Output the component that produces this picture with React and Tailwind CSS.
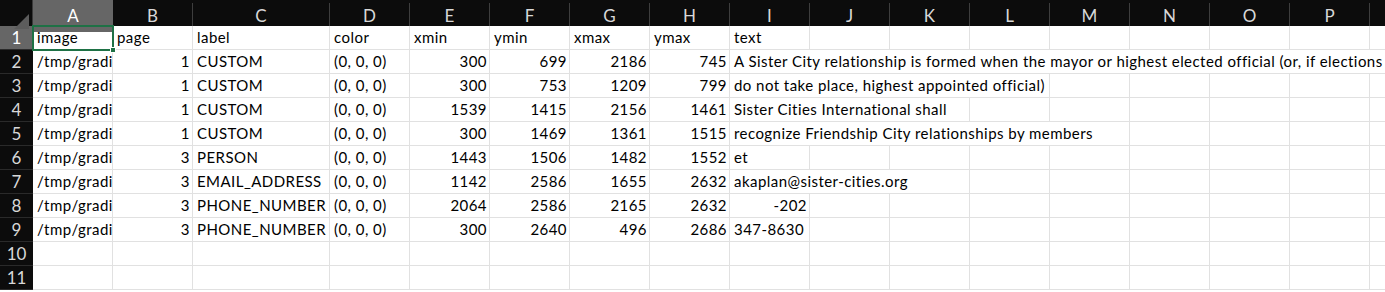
const cols = ['A', 'B', 'C', 'D', 'E', 'F', 'G', 'H', 'I', 'J', 'K', 'L', 'M', 'N', 'O', 'P', ''];

const rows = [
  { cells: ['image', 'page', 'label', 'color', 'xmin', 'ymin', 'xmax', 'ymax'], text: 'text', span: 1, head: true },
  { cells: ['/tmp/gradi', '1', 'CUSTOM', '(0, 0, 0)', '300', '699', '2186', '745'], text: 'A Sister City relationship is formed when the mayor or highest elected official (or, if elections', span: 9 },
  { cells: ['/tmp/gradi', '1', 'CUSTOM', '(0, 0, 0)', '300', '753', '1209', '799'], text: 'do not take place, highest appointed official)', span: 4 },
  { cells: ['/tmp/gradi', '1', 'CUSTOM', '(0, 0, 0)', '1539', '1415', '2156', '1461'], text: 'Sister Cities International shall', span: 3 },
  { cells: ['/tmp/gradi', '1', 'CUSTOM', '(0, 0, 0)', '300', '1469', '1361', '1515'], text: 'recognize Friendship City relationships by members', span: 5 },
  { cells: ['/tmp/gradi', '3', 'PERSON', '(0, 0, 0)', '1443', '1506', '1482', '1552'], text: 'et', span: 1 },
  { cells: ['/tmp/gradi', '3', 'EMAIL_ADDRESS', '(0, 0, 0)', '1142', '2586', '1655', '2632'], text: 'akaplan@sister-cities.org', span: 3 },
  { cells: ['/tmp/gradi', '3', 'PHONE_NUMBER', '(0, 0, 0)', '2064', '2586', '2165', '2632'], text: '-202', span: 1, right: true },
  { cells: ['/tmp/gradi', '3', 'PHONE_NUMBER', '(0, 0, 0)', '300', '2640', '496', '2686'], text: '347-8630', span: 1 },
  null,
  null,
];

const spanClass = {
  1: 'col-span-1',
  3: 'col-span-3',
  4: 'col-span-4',
  5: 'col-span-5',
  9: 'col-span-9',
};

// columns whose values sit on the right (numbers)
const numeric = [1, 4, 5, 6, 7];
const grid = 'grid grid-cols-[33px_80px_80px_137px_repeat(14,80px)]';

function Cell({ children, right, className = '' }) {
  return (
    <div
      className={`h-6 border-r border-b border-[#e1e1e1] overflow-hidden whitespace-nowrap px-[4px] leading-[23px] tracking-[0.45px] ${right ? 'text-right pr-[2px]' : ''} ${className}`}
    >
      {children}
    </div>
  );
}

export default function App() {
  return (
    <div className="w-[1385px] h-[292px] overflow-hidden bg-white text-[15px] text-black" style={{ fontFamily: 'Lato, "Liberation Sans", sans-serif' }}>
      <div className="w-[1450px]">
        <div className={`${grid} h-[26px] bg-[#0c0c0c]`}>
          <div className="relative border-r border-[#3a3a3a]">
            <div className="absolute right-[3px] bottom-[3px] w-0 h-0 border-l-[15px] border-l-transparent border-b-[15px] border-b-[#5c5c5c]" />
          </div>
          {cols.map((c, i) => (
            <div
              key={i}
              className={`flex items-center justify-center text-[17px] ${i === 0 ? 'bg-[#666666] text-white' : 'text-[#d8d8d8] border-r border-[#3e3e3e] mt-[3px] pb-[3px]'}`}
            >
              {c}
            </div>
          ))}
        </div>

        {rows.map((r, ri) => (
          <div key={ri} className={grid}>
            <div
              className={`h-6 flex items-center justify-center text-[17px] border-b border-[#2a2a2a] ${ri === 0 ? 'bg-[#666666] text-white' : 'bg-[#0c0c0c] text-[#d8d8d8]'}`}
            >
              {ri + 1}
            </div>
            {r ? (
              <>
                {r.cells.map((v, ci) => (
                  <Cell key={ci} right={!r.head && numeric.includes(ci)} className={ri === 0 && ci === 0 ? 'relative overflow-visible' : ''}>
                    {v}
                    {ri === 0 && ci === 0 && (
                      <div className="absolute -left-px -top-px w-[82px] h-[26px] border-2 border-[#1e7145] pointer-events-none">
                        <div className="absolute -right-[4px] -bottom-[4px] w-[6px] h-[6px] bg-[#1e7145] border border-white" />
                      </div>
                    )}
                  </Cell>
                ))}
                <Cell right={r.right} className={spanClass[r.span]}>
                  {r.text}
                </Cell>
                {Array.from({ length: 9 - r.span }).map((_, k) => (
                  <Cell key={`e${k}`} />
                ))}
              </>
            ) : (
              Array.from({ length: 17 }).map((_, k) => <Cell key={k} />)
            )}
          </div>
        ))}
      </div>
    </div>
  );
}
